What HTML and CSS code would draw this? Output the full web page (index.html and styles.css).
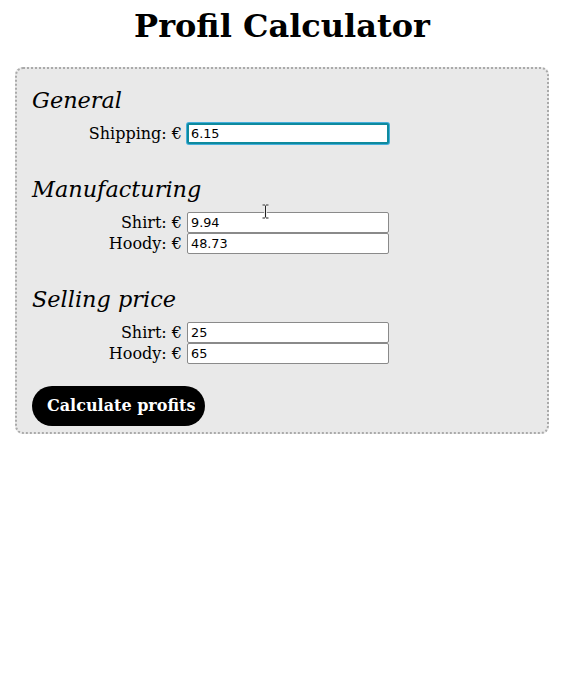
FILE: index.html
```html
<!DOCTYPE html>
<html>
<head>
<meta charset="utf-8">
<title>Profil Calculator</title>
<link rel="stylesheet" href="styles.css">
</head>
<body>
<h1 class="title">Profil Calculator</h1>
<form class="calc">
  <section class="group">
    <h2 class="group-title">General</h2>
    <div class="row"><label class="lbl" for="ship">Shipping: €</label><input class="field field-focus" id="ship" type="text" value="6.15" autofocus></div>
  </section>
  <section class="group">
    <h2 class="group-title">Manufacturing</h2>
    <div class="row"><label class="lbl" for="ms">Shirt: €</label><input class="field" id="ms" type="text" value="9.94"></div>
    <div class="row"><label class="lbl" for="mh">Hoody: €</label><input class="field" id="mh" type="text" value="48.73"></div>
  </section>
  <section class="group group-last">
    <h2 class="group-title">Selling price</h2>
    <div class="row"><label class="lbl" for="ss">Shirt: €</label><input class="field" id="ss" type="text" value="25"></div>
    <div class="row"><label class="lbl" for="sh">Hoody: €</label><input class="field" id="sh" type="text" value="65"></div>
  </section>
  <button class="btn" type="button">Calculate profits</button>
  <svg class="ibeam" width="7" height="15" viewBox="0 0 7 15"><path d="M0.5 1h2.5M4 1h2.5M3.5 1.5v12M0.5 14h2.5M4 14h2.5" stroke="#fff" stroke-width="2.6" fill="none"/><path d="M0.5 1h2.5M4 1h2.5M3.5 1.5v12M0.5 14h2.5M4 14h2.5" stroke="#222" stroke-width="1.1" fill="none"/></svg>
</form>
</body>
</html>
```
FILE: styles.css
```css
html, body { background: #fff; }
body {
  margin: 8px;
  font-family: "DejaVu Serif", serif;
  font-size: 16px;
  color: #000;
}
.title {
  margin: 0 0 22px;
  text-align: center;
  font-size: 32px;
  font-weight: bold;
  line-height: 37px;
}
.calc {
  position: relative;
  margin: 0 7px;
  background: #e9e9e9;
  border: 2px dotted #aaa;
  border-radius: 8px;
  padding: 18px 15px 6px;
}
.group { margin-bottom: 31px; }
.group-last { margin-bottom: 21px; }
.group-title {
  margin: 0 0 10px;
  font-size: 22.4px;
  font-style: italic;
  font-weight: normal;
  line-height: 26px;
}
.row {
  display: flex;
  align-items: center;
  height: 21.5px;
}
.lbl {
  width: 150px;
  text-align: right;
  margin-right: 5px;
}
.field {
  box-sizing: border-box;
  width: 202px;
  height: 21px;
  margin: 0;
  padding: 1px 3px;
  border: 1px solid #8a8a8a;
  border-radius: 2px;
  background: #fff;
  font-family: "DejaVu Sans", sans-serif;
  font-size: 12.8px;
  color: #000;
}
.field-focus, .field:focus {
  border: 2px solid #0e8a9e;
  box-shadow: 0 0 0 1px #45aedc;
  outline: none;
  padding: 0 2px;
}
.btn {
  display: block;
  margin: 0;
  height: 40px;
  padding: 0 10px 0 15px;
  border: none;
  border-radius: 20px;
  background: #000;
  color: #fff;
  font-family: "DejaVu Serif", serif;
  font-size: 16px;
  font-weight: bold;
}
.ibeam {
  position: absolute;
  left: 245px;
  top: 135px;
}
```
